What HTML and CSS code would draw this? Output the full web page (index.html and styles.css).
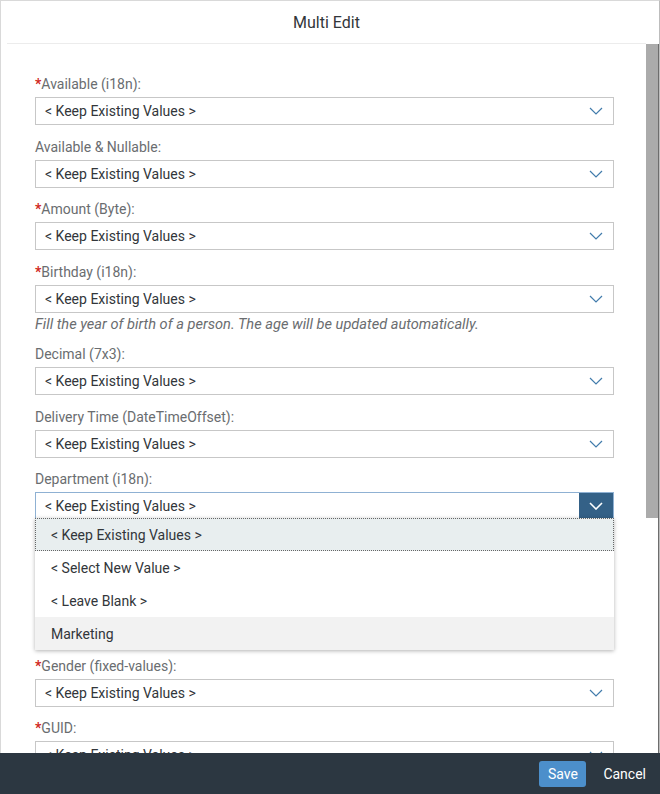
FILE: index.html
```html
<!DOCTYPE html>
<html>
<head>
<meta charset="utf-8">
<link rel="stylesheet" href="styles.css">
</head>
<body>
<div class="dialog">
  <header class="header"><h1 class="title">Multi Edit</h1></header>
  <div class="body">
    <div class="content">
      <div class="field">
        <label class="label"><span class="req">*</span>Available (i18n):</label>
        <div class="select"><span class="value">&lt; Keep Existing Values &gt;</span><span class="arrow"><svg width="14" height="8" viewBox="0 0 14 8"><path d="M1 1 L7 7 L13 1" fill="none" stroke="currentColor" stroke-width="1.2"/></svg></span></div>
      </div>
      <div class="field">
        <label class="label">Available &amp; Nullable:</label>
        <div class="select"><span class="value">&lt; Keep Existing Values &gt;</span><span class="arrow"><svg width="14" height="8" viewBox="0 0 14 8"><path d="M1 1 L7 7 L13 1" fill="none" stroke="currentColor" stroke-width="1.2"/></svg></span></div>
      </div>
      <div class="field">
        <label class="label"><span class="req">*</span>Amount (Byte):</label>
        <div class="select"><span class="value">&lt; Keep Existing Values &gt;</span><span class="arrow"><svg width="14" height="8" viewBox="0 0 14 8"><path d="M1 1 L7 7 L13 1" fill="none" stroke="currentColor" stroke-width="1.2"/></svg></span></div>
      </div>
      <div class="field">
        <label class="label"><span class="req">*</span>Birthday (i18n):</label>
        <div class="select"><span class="value">&lt; Keep Existing Values &gt;</span><span class="arrow"><svg width="14" height="8" viewBox="0 0 14 8"><path d="M1 1 L7 7 L13 1" fill="none" stroke="currentColor" stroke-width="1.2"/></svg></span></div>
        <p class="hint">Fill the year of birth of a person. The age will be updated automatically.</p>
      </div>
      <div class="field">
        <label class="label">Decimal (7x3):</label>
        <div class="select"><span class="value">&lt; Keep Existing Values &gt;</span><span class="arrow"><svg width="14" height="8" viewBox="0 0 14 8"><path d="M1 1 L7 7 L13 1" fill="none" stroke="currentColor" stroke-width="1.2"/></svg></span></div>
      </div>
      <div class="field">
        <label class="label">Delivery Time (DateTimeOffset):</label>
        <div class="select"><span class="value">&lt; Keep Existing Values &gt;</span><span class="arrow"><svg width="14" height="8" viewBox="0 0 14 8"><path d="M1 1 L7 7 L13 1" fill="none" stroke="currentColor" stroke-width="1.2"/></svg></span></div>
      </div>
      <div class="field field-open">
        <label class="label">Department (i18n):</label>
        <div class="select select-focus"><span class="value">&lt; Keep Existing Values &gt;</span><span class="arrow arrow-active"><svg width="14" height="8" viewBox="0 0 14 8"><path d="M1 1 L7 7 L13 1" fill="none" stroke="currentColor" stroke-width="1.6"/></svg></span></div>
        <ul class="popover">
          <li class="item item-selected">&lt; Keep Existing Values &gt;</li>
          <li class="item">&lt; Select New Value &gt;</li>
          <li class="item">&lt; Leave Blank &gt;</li>
          <li class="item item-hover">Marketing</li>
        </ul>
      </div>
      <div class="covered"></div>
      <div class="field">
        <label class="label"><span class="req">*</span>Gender (fixed-values):</label>
        <div class="select"><span class="value">&lt; Keep Existing Values &gt;</span><span class="arrow"><svg width="14" height="8" viewBox="0 0 14 8"><path d="M1 1 L7 7 L13 1" fill="none" stroke="currentColor" stroke-width="1.2"/></svg></span></div>
      </div>
      <div class="field">
        <label class="label"><span class="req">*</span>GUID:</label>
        <div class="select"><span class="value">&lt; Keep Existing Values &gt;</span><span class="arrow"><svg width="14" height="8" viewBox="0 0 14 8"><path d="M1 1 L7 7 L13 1" fill="none" stroke="currentColor" stroke-width="1.2"/></svg></span></div>
      </div>
    </div>
    <div class="scrollbar"><div class="thumb"></div></div>
  </div>
  <footer class="footer">
    <button class="btn btn-save">Save</button>
    <button class="btn btn-cancel">Cancel</button>
  </footer>
</div>
</body>
</html>
```
FILE: styles.css
```css
* { box-sizing: border-box; }
html, body { margin: 0; padding: 0; }
body {
  width: 660px;
  height: 794px;
  overflow: hidden;
  background: #fff;
  font-family: Roboto, "Liberation Sans", sans-serif;
  color: #32363a;
}
.dialog {
  width: 660px;
  height: 794px;
  border: 1px solid #d9d9d9;
  border-right: 1px solid #bdbdbd;
  display: flex;
  flex-direction: column;
  position: relative;
}
.header {
  height: 43px;
  flex: none;
  display: flex;
  align-items: center;
  justify-content: center;
  margin: 0 13px 0 6px;
  border-bottom: 1px solid #ececec;
}
.title {
  margin: 0;
  font-size: 16px;
  font-weight: 400;
  color: #32363a;
}
.body {
  flex: 1;
  display: flex;
  min-height: 0;
  overflow: hidden;
}
.content {
  flex: 1;
  padding: 30px 32px 0 34px;
  display: flex;
  flex-direction: column;
  gap: 11.5px;
}
.field {
  display: flex;
  flex-direction: column;
  position: relative;
}
.label {
  display: block;
  font-size: 14px;
  line-height: 20px;
  height: 20px;
  margin-bottom: 3px;
  color: #6a6d70;
}
.req {
  color: #d0271d;
  font-weight: 700;
}
.select {
  height: 28px;
  border: 1px solid #c7c7c7;
  background: #fff;
  display: flex;
  align-items: center;
  justify-content: space-between;
}
.value {
  padding-left: 9px;
  font-size: 14px;
  color: #32363a;
}
.arrow {
  width: 34px;
  height: 100%;
  display: flex;
  align-items: center;
  justify-content: center;
  color: #427cac;
}
.select-focus {
  border-color: #8fb1d3;
}
.arrow-active {
  background: #346187;
  color: #fff;
  height: 26px;
}
.hint {
  margin: 2px 0 0 0;
  font-size: 14.6px;
  line-height: 18px;
  font-style: italic;
  color: #6a6d70;
}
.popover {
  position: absolute;
  top: 49px;
  left: 0;
  right: 0;
  margin: 0;
  padding: 0;
  list-style: none;
  background: #fff;
  box-shadow: 0 1px 4px rgba(0,0,0,0.3);
  z-index: 2;
}
.item {
  height: 33px;
  display: flex;
  align-items: center;
  padding-left: 16px;
  font-size: 14px;
  color: #32363a;
}
.item-selected {
  background: #e8eeef;
  border: 1px dotted #666;
  padding-left: 15px;
}
.item-hover {
  background: #f2f2f2;
}
.covered {
  height: 112.5px;
  flex: none;
}
.scrollbar {
  width: 13px;
  flex: none;
  margin-right: 0;
  border-right: 1px solid #6d6d6d;
}
.thumb {
  height: 474px;
  background: #ababab;
}
.footer {
  height: 41px;
  flex: none;
  background: #2c3741;
  display: flex;
  align-items: center;
  justify-content: flex-end;
  gap: 13px;
  padding-right: 10px;
  margin-left: -1px;
  margin-right: -1px;
  margin-bottom: -1px;
}
.btn {
  font-family: Roboto, "Liberation Sans", sans-serif;
  font-size: 14px;
  color: #fff;
  border: none;
  background: transparent;
  height: 26px;
  padding: 0 8px;
}
.btn-save {
  background: #4c8fcb;
  border-radius: 3px;
  width: 47px;
}
.btn-cancel {
  padding: 0 4px;
}
```
